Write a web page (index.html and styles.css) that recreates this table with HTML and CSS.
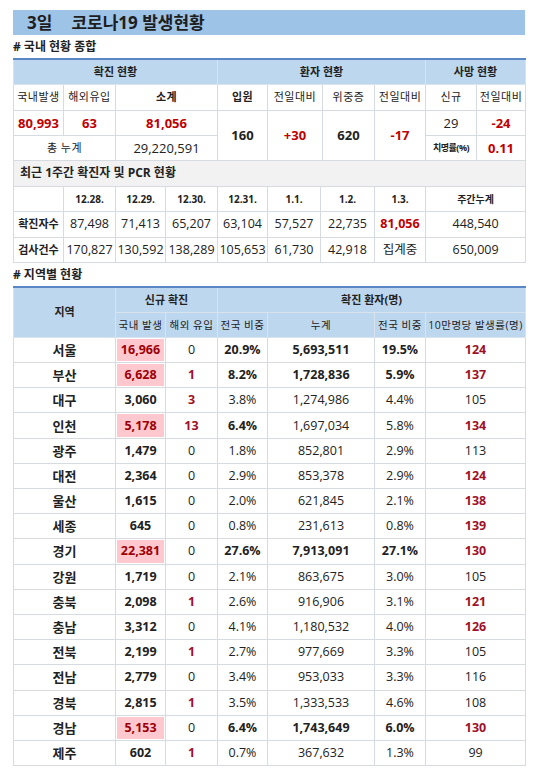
FILE: index.html
```html
<!DOCTYPE html>
<html lang="ko">
<head>
  <meta charset="UTF-8" />
  <meta name="viewport" content="width=device-width, initial-scale=1.0" />
  <title>3일 코로나19 발생현황</title>
  <link rel="stylesheet" href="styles.css">
</head>
<body>
  <div class="page">
    <div class="title"><span class="day">3일</span>코로나19 발생현황</div>

    <!-- 국내 현황 종합 -->
    <div class="label"># 국내 현황 종합</div>
    <table class="grid summary">
      <colgroup>
        <col style="width:50px"><col style="width:52px"><col style="width:102px"><col style="width:50px">
        <col style="width:55px"><col style="width:52px"><col style="width:51px"><col style="width:51px"><col style="width:49px">
      </colgroup>
      <tr class="h1">
        <th colspan="3">확진 현황</th>
        <th colspan="4">환자 현황</th>
        <th colspan="2">사망 현황</th>
      </tr>
      <tr class="h2">
        <td class="sub">국내발생</td><td class="sub">해외유입</td><td class="sub b">소계</td>
        <td class="sub b">입원</td><td class="sub">전일대비</td><td class="sub">위중증</td><td class="sub">전일대비</td>
        <td class="sub">신규</td><td class="sub">전일대비</td>
      </tr>
      <tr>
        <td class="red b big">80,993</td><td class="red b big">63</td><td class="red b big">81,056</td>
        <td rowspan="2" class="b big">160</td><td rowspan="2" class="red b big">+30</td>
        <td rowspan="2" class="b big">620</td><td rowspan="2" class="red b big">-17</td>
        <td class="big">29</td><td class="red b big">-24</td>
      </tr>
      <tr>
        <td colspan="2" class="sub">총 누계</td><td class="big">29,220,591</td>
        <td class="tiny">치명률(%)</td><td class="red b big">0.11</td>
      </tr>
    </table>

    <!-- 최근 1주간 -->
    <table class="grid week">
      <colgroup>
        <col style="width:50px"><col style="width:52px"><col style="width:50px"><col style="width:52px"><col style="width:50px">
        <col style="width:53px"><col style="width:54px"><col style="width:51px"><col style="width:100px">
      </colgroup>
      <tr class="bar"><td colspan="9">최근 1주간 확진자 및 PCR 현황</td></tr>
      <tr class="dates">
        <td></td><td>12.28.</td><td>12.29.</td><td>12.30.</td><td>12.31.</td><td>1.1.</td><td>1.2.</td><td>1.3.</td><td>주간누계</td>
      </tr>
      <tr>
        <td class="rowname">확진자수</td><td>87,498</td><td>71,413</td><td>65,207</td><td>63,104</td><td>57,527</td><td>22,735</td>
        <td class="red b">81,056</td><td>448,540</td>
      </tr>
      <tr>
        <td class="rowname">검사건수</td><td>170,827</td><td>130,592</td><td>138,289</td><td>105,653</td><td>61,730</td><td>42,918</td>
        <td class="kr">집계중</td><td>650,009</td>
      </tr>
    </table>

    <!-- 지역별 현황 -->
    <div class="label"># 지역별 현황</div>
    <table class="grid region">
      <colgroup>
        <col style="width:102px"><col style="width:50px"><col style="width:52px"><col style="width:50px">
        <col style="width:107px"><col style="width:51px"><col style="width:100px">
      </colgroup>
      <tr class="h1">
        <th rowspan="2">지역</th>
        <th colspan="2">신규 확진</th>
        <th colspan="4">확진 환자(명)</th>
      </tr>
      <tr class="h1 h2row">
        <td>국내 발생</td><td>해외 유입</td><td>전국 비중</td><td>누계</td><td>전국 비중</td><td>10만명당 발생률(명)</td>
      </tr>
      <tbody id="rows"></tbody>
    </table>
  </div>

  <script>
    // 지역, 국내발생, 해외유입, 전국비중, 누계, 전국비중, 10만명당, 강조
    const regions = [
      ['서울', '16,966', 0, '20.9%', '5,693,511', '19.5%', 124, 1],
      ['부산', '6,628', 1, '8.2%', '1,728,836', '5.9%', 137, 1],
      ['대구', '3,060', 3, '3.8%', '1,274,986', '4.4%', 105, 0],
      ['인천', '5,178', 13, '6.4%', '1,697,034', '5.8%', 134, 2],
      ['광주', '1,479', 0, '1.8%', '852,801', '2.9%', 113, 0],
      ['대전', '2,364', 0, '2.9%', '853,378', '2.9%', 124, 0],
      ['울산', '1,615', 0, '2.0%', '621,845', '2.1%', 138, 0],
      ['세종', '645', 0, '0.8%', '231,613', '0.8%', 139, 0],
      ['경기', '22,381', 0, '27.6%', '7,913,091', '27.1%', 130, 1],
      ['강원', '1,719', 0, '2.1%', '863,675', '3.0%', 105, 0],
      ['충북', '2,098', 1, '2.6%', '916,906', '3.1%', 121, 0],
      ['충남', '3,312', 0, '4.1%', '1,180,532', '4.0%', 126, 0],
      ['전북', '2,199', 1, '2.7%', '977,669', '3.3%', 105, 0],
      ['전남', '2,779', 0, '3.4%', '953,033', '3.3%', 116, 0],
      ['경북', '2,815', 1, '3.5%', '1,333,533', '4.6%', 108, 0],
      ['경남', '5,153', 0, '6.4%', '1,743,649', '6.0%', 130, 1],
      ['제주', '602', 1, '0.7%', '367,632', '1.3%', 99, 0]
    ];

    const body = document.getElementById('rows');
    regions.forEach(r => {
      const hot = r[7] > 0;
      const tr = document.createElement('tr');
      tr.innerHTML =
        `<td class="b kr">${r[0]}</td>` +
        `<td class="${hot ? 'pink' : 'b'}">${r[1]}</td>` +
        `<td class="${r[2] > 0 ? 'dark b' : ''}">${r[2]}</td>` +
        `<td class="${hot ? 'b' : ''}">${r[3]}</td>` +
        `<td class="${r[7] === 1 ? 'b' : ''}">${r[4]}</td>` +
        `<td class="${r[7] === 1 ? 'b' : ''}">${r[5]}</td>` +
        `<td class="${r[6] >= 120 ? 'dark b' : ''}">${r[6]}</td>`;
      body.appendChild(tr);
    });
  </script>
</body>
</html>
```

FILE: styles.css
```css
* {
  margin: 0;
  padding: 0;
  box-sizing: border-box;
}

body {
  background: #fff;
  font-family: 'Open Sans', 'Noto Sans CJK KR', sans-serif;
  color: #222;
}

.page {
  width: 537px;
  padding: 10px 12px 0 13px;
}

.title {
  background: #9dc3e6;
  height: 25px;
  line-height: 25px;
  padding-left: 14px;
  font-size: 17px;
  font-weight: bold;
  color: #1e1e1e;
}

.title .day {
  margin-right: 19px;
}

.label {
  height: 23px;
  line-height: 24px;
  font-size: 12px;
  font-weight: bold;
}

.grid {
  width: 512px;
  border-collapse: collapse;
  table-layout: fixed;
  font-size: 12px;
}

.grid td,
.grid th {
  border: 1px solid #d6dbe1;
  text-align: center;
  vertical-align: middle;
  line-height: 14px;
  padding: 0;
  white-space: nowrap;
  overflow: hidden;
}

.grid .h1 th,
.grid .h1 td {
  background: #bdd7ee;
  font-size: 11px;
  font-weight: bold;
  border-color: #d9e3ee;
}

.summary .h1 th,
.region .h1:first-child th {
  border-top: 2px solid #5b86c5;
  height: 24px;
}

.summary tr {
  height: 25px;
}

.summary .h2 {
  height: 26px;
}

.summary .sub {
  font-size: 11px;
  letter-spacing: 0.5px;
}

.big {
  font-size: 13px;
}

.tiny {
  font-size: 9px;
  font-weight: bold;
  letter-spacing: -0.5px;
}

.b {
  font-weight: bold;
}

.red {
  color: #c00000;
}

.dark {
  color: #a01127;
}

.week tr {
  height: 25.5px;
}

.week .bar td {
  background: #f2f2f2;
  text-align: left;
  padding-left: 6px;
  font-size: 12px;
  font-weight: bold;
  height: 25px;
  border-top: none;
}

.week .dates td {
  font-size: 10px;
  font-weight: bold;
}

.week .rowname {
  font-size: 11px;
  font-weight: bold;
}

.week td {
  font-size: 12.5px;
}

.kr {
  font-size: 13px;
}

.region tr {
  height: 25.2px;
}

.region .h2row td {
  font-size: 10.5px;
  font-weight: normal;
  letter-spacing: 0.5px;
  height: 25px;
}

.region tbody td {
  font-size: 12.5px;
}

.region td.kr {
  font-size: 13px;
}

.pink {
  background: #ffc7ce;
  color: #9c0006;
  font-weight: bold;
  box-shadow: inset 0 0 0 1px #fff;
}
```
